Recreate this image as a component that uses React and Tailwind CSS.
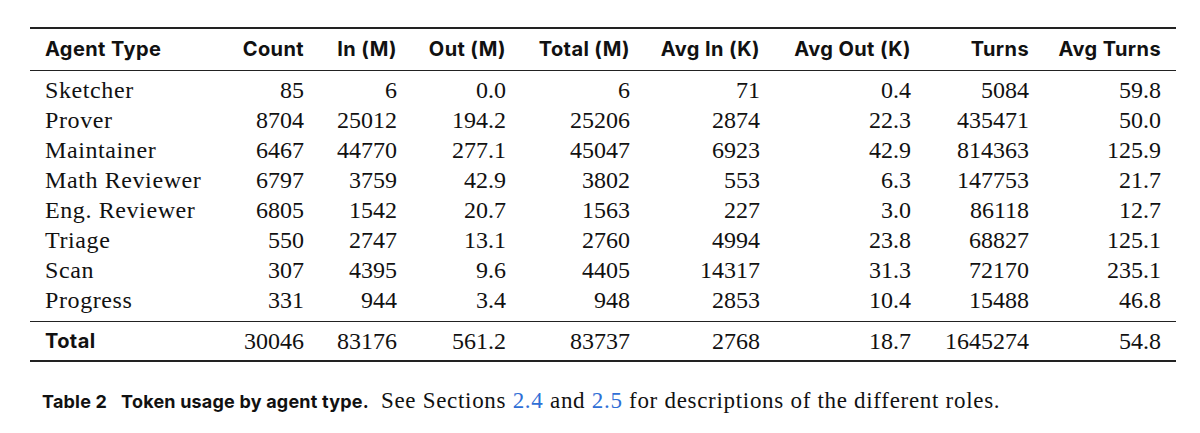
const rows = [
  ["Sketcher", "85", "6", "0.0", "6", "71", "0.4", "5084", "59.8"],
  ["Prover", "8704", "25012", "194.2", "25206", "2874", "22.3", "435471", "50.0"],
  ["Maintainer", "6467", "44770", "277.1", "45047", "6923", "42.9", "814363", "125.9"],
  ["Math Reviewer", "6797", "3759", "42.9", "3802", "553", "6.3", "147753", "21.7"],
  ["Eng. Reviewer", "6805", "1542", "20.7", "1563", "227", "3.0", "86118", "12.7"],
  ["Triage", "550", "2747", "13.1", "2760", "4994", "23.8", "68827", "125.1"],
  ["Scan", "307", "4395", "9.6", "4405", "14317", "31.3", "72170", "235.1"],
  ["Progress", "331", "944", "3.4", "948", "2853", "10.4", "15488", "46.8"],
];

const total = ["Total", "30046", "83176", "561.2", "83737", "2768", "18.7", "1645274", "54.8"];

const headers = [
  "Agent Type",
  "Count",
  "In (M)",
  "Out (M)",
  "Total (M)",
  "Avg In (K)",
  "Avg Out (K)",
  "Turns",
  "Avg Turns",
];

const widths = [184, 90, 93, 109, 124, 130, 151, 118, 147];

const sans = "font-['Inter','Open_Sans',sans-serif]";
const serif = "font-['Liberation_Serif','Times_New_Roman',serif]";

export default function App() {
  return (
    <div className="w-[1200px] h-[433px] bg-white text-[#111] pt-[27px] pl-[30px]">
      <table className="border-collapse table-fixed w-[1146px] whitespace-nowrap">
        <colgroup>
          {widths.map((w, i) => (
            <col key={i} style={{ width: w }} />
          ))}
        </colgroup>
        <thead>
          <tr className="border-t-2 border-b border-[#222] h-[42px]">
            {headers.map((h, i) => (
              <th
                key={h}
                className={`${sans} text-[20px] font-bold tracking-[0.4px] p-0 ${
                  i === 0 ? "text-left pl-[15px]" : "text-right"
                } ${i === 8 ? "pr-[15px]" : ""}`}>
                {h}
              </th>
            ))}
          </tr>
        </thead>
        <tbody className={`${serif} text-[24px]`}>
          <tr className="h-[5px]">
            <td colSpan={9} className="p-0"></td>
          </tr>
          {rows.map((r) => (
            <tr key={r[0]} className="h-[30px]">
              {r.map((c, i) => (
                <td
                  key={i}
                  className={`p-0 leading-[30px] ${
                    i === 0 ? "text-left pl-[15px] tracking-[0.6px]" : "text-right"
                  } ${i === 8 ? "pr-[15px]" : ""}`}>
                  {c}
                </td>
              ))}
            </tr>
          ))}
          <tr className="h-[6px] border-b border-[#222]">
            <td colSpan={9} className="p-0"></td>
          </tr>
          <tr className="h-[40px] border-b-2 border-[#222]">
            {total.map((c, i) => (
              <td
                key={i}
                className={`p-0 ${
                  i === 0
                    ? `${sans} text-[20px] font-bold tracking-[0.4px] text-left pl-[15px]`
                    : "text-right"
                } ${i === 8 ? "pr-[15px]" : ""}`}>
                {c}
              </td>
            ))}
          </tr>
        </tbody>
      </table>

      <p className="mt-[22px] pl-[12px] whitespace-nowrap">
        <span className={`${sans} text-[18px] font-bold tracking-[0.2px]`}>
          Table 2
        </span>
        <span className={`${sans} text-[18px] font-bold tracking-[0.2px] ml-[14px]`}>
          Token usage by agent type.
        </span>
        <span className={`${serif} text-[23px] tracking-[0.7px] ml-[12px]`}>
          See Sections <span className="text-[#2f6fd6]">2.4</span> and{" "}
          <span className="text-[#2f6fd6]">2.5</span> for descriptions of the
          different roles.
        </span>
      </p>
    </div>
  );
}
